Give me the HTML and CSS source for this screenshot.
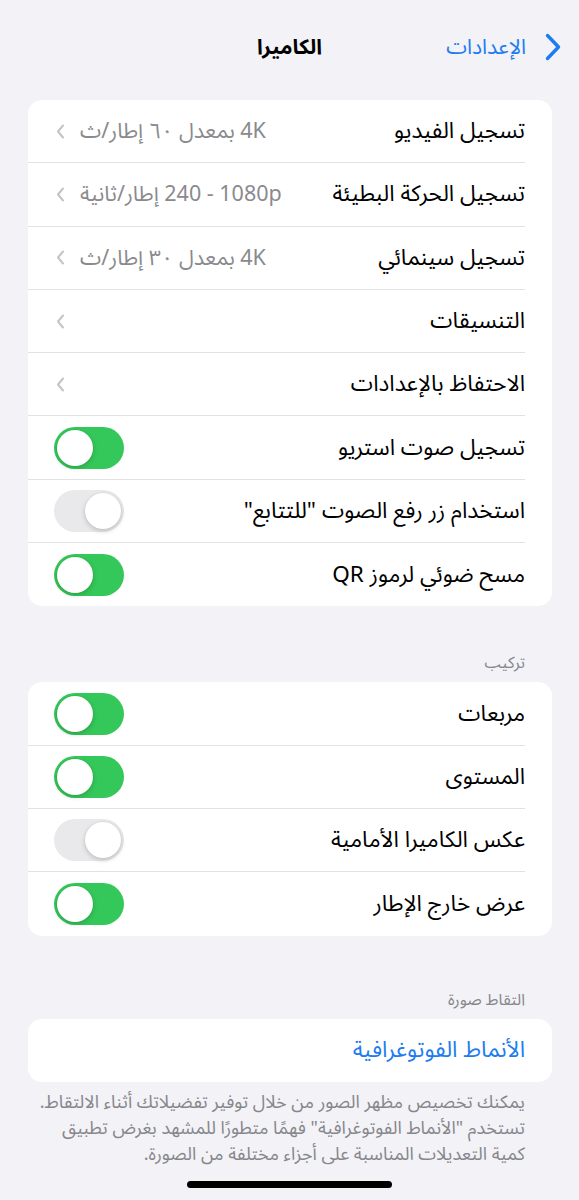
FILE: index.html
```html
<!DOCTYPE html>
<html lang="ar" dir="rtl">
<head>
  <meta charset="UTF-8">
  <meta name="viewport" content="width=device-width, initial-scale=1.0">
  <title>الكاميرا</title>
  <link rel="stylesheet" href="styles.css">
</head>
<body>
  <header class="nav">
    <a class="back" href="#">
      <svg class="back-chevron" width="16" height="28" viewBox="0 0 16 28"><path d="M2.5 2.5 L13.5 14 L2.5 25.5" fill="none" stroke="currentColor" stroke-width="3.4" stroke-linecap="round" stroke-linejoin="round"/></svg>
      <span>الإعدادات</span>
    </a>
    <h1 class="title">الكاميرا</h1>
    <span></span>
  </header>

  <main class="content">
    <section class="card">
      <div class="row"><div class="row-body">
        <span class="label">تسجيل الفيديو</span>
        <span class="detail">4K بمعدل ٦٠ إطار/ث</span>
        <svg class="chev" width="9" height="15" viewBox="0 0 9 15"><path d="M7 1.5 L2 7.5 L7 13.5" fill="none" stroke="currentColor" stroke-width="2" stroke-linecap="round" stroke-linejoin="round"/></svg>
      </div></div>
      <div class="row"><div class="row-body">
        <span class="label">تسجيل الحركة البطيئة</span>
        <span class="detail">1080p&rlm; - 240 إطار/ثانية</span>
        <svg class="chev" width="9" height="15" viewBox="0 0 9 15"><path d="M7 1.5 L2 7.5 L7 13.5" fill="none" stroke="currentColor" stroke-width="2" stroke-linecap="round" stroke-linejoin="round"/></svg>
      </div></div>
      <div class="row"><div class="row-body">
        <span class="label">تسجيل سينمائي</span>
        <span class="detail">4K بمعدل ٣٠ إطار/ث</span>
        <svg class="chev" width="9" height="15" viewBox="0 0 9 15"><path d="M7 1.5 L2 7.5 L7 13.5" fill="none" stroke="currentColor" stroke-width="2" stroke-linecap="round" stroke-linejoin="round"/></svg>
      </div></div>
      <div class="row"><div class="row-body">
        <span class="label">التنسيقات</span>
        <span class="detail"></span>
        <svg class="chev" width="9" height="15" viewBox="0 0 9 15"><path d="M7 1.5 L2 7.5 L7 13.5" fill="none" stroke="currentColor" stroke-width="2" stroke-linecap="round" stroke-linejoin="round"/></svg>
      </div></div>
      <div class="row"><div class="row-body">
        <span class="label">الاحتفاظ بالإعدادات</span>
        <span class="detail"></span>
        <svg class="chev" width="9" height="15" viewBox="0 0 9 15"><path d="M7 1.5 L2 7.5 L7 13.5" fill="none" stroke="currentColor" stroke-width="2" stroke-linecap="round" stroke-linejoin="round"/></svg>
      </div></div>
      <div class="row"><div class="row-body">
        <span class="label">تسجيل صوت استريو</span>
        <span class="switch on"><span class="knob"></span></span>
      </div></div>
      <div class="row"><div class="row-body">
        <span class="label">استخدام زر رفع الصوت "للتتابع"</span>
        <span class="switch off"><span class="knob"></span></span>
      </div></div>
      <div class="row"><div class="row-body">
        <span class="label">مسح ضوئي لرموز QR</span>
        <span class="switch on"><span class="knob"></span></span>
      </div></div>
    </section>

    <h2 class="section-head">تركيب</h2>
    <section class="card">
      <div class="row"><div class="row-body">
        <span class="label">مربعات</span>
        <span class="switch on"><span class="knob"></span></span>
      </div></div>
      <div class="row"><div class="row-body">
        <span class="label">المستوى</span>
        <span class="switch on"><span class="knob"></span></span>
      </div></div>
      <div class="row"><div class="row-body">
        <span class="label">عكس الكاميرا الأمامية</span>
        <span class="switch off"><span class="knob"></span></span>
      </div></div>
      <div class="row"><div class="row-body">
        <span class="label">عرض خارج الإطار</span>
        <span class="switch on"><span class="knob"></span></span>
      </div></div>
    </section>

    <h2 class="section-head photo">التقاط صورة</h2>
    <section class="card">
      <div class="row"><div class="row-body">
        <span class="label link">الأنماط الفوتوغرافية</span>
      </div></div>
    </section>
    <p class="footnote">يمكنك تخصيص مظهر الصور من خلال توفير تفضيلاتك أثناء الالتقاط.<br>تستخدم "الأنماط الفوتوغرافية" فهمًا متطورًا للمشهد بغرض تطبيق كمية التعديلات المناسبة على أجزاء مختلفة من الصورة.</p>
  </main>

  <div class="home-bar"></div>
</body>
</html>
```

FILE: styles.css
```css
html, body {
  margin: 0;
  padding: 0;
}

body {
  font-family: "Noto Sans Arabic", "DejaVu Sans", sans-serif;
  background-color: #f2f2f7;
  color: #000;
  width: 579px;
  height: 1200px;
  overflow: hidden;
}

.nav {
  display: grid;
  grid-template-columns: 1fr auto 1fr;
  align-items: center;
  height: 60px;
  padding: 17px 18px 0 18px;
}

.back {
  display: flex;
  align-items: center;
  gap: 19px;
  color: #1c7cf0;
  text-decoration: none;
  font-size: 21px;
}

.back-chevron {
  color: #1c7cf0;
}

.title {
  margin: 0;
  font-size: 21px;
  font-weight: bold;
}

.content {
  padding: 23px 27px 0 28px;
}

.card {
  background-color: #fff;
  border-radius: 14px;
  overflow: hidden;
}

.row {
  padding-right: 27px;
  height: 63.3px;
  display: flex;
}

.row-body {
  flex: 1;
  display: flex;
  align-items: center;
  padding-left: 26px;
  border-bottom: 1px solid #e2e2e5;
}

.row:last-child .row-body {
  border-bottom: none;
}

.label {
  flex: 1;
  font-size: 22.5px;
  white-space: nowrap;
}

.label.link {
  color: #1c7cf0;
}

.detail {
  color: #8a8a8e;
  font-size: 21.5px;
  margin-left: 15px;
  white-space: nowrap;
}

.chev {
  color: #c4c4c7;
  margin-left: 2px;
}

.switch {
  width: 70px;
  height: 42px;
  border-radius: 21px;
  display: flex;
  align-items: center;
  padding: 3px;
  box-sizing: border-box;
}

.switch.on {
  background-color: #34c759;
  justify-content: flex-end;
}

.switch.off {
  background-color: #e9e9eb;
  justify-content: flex-start;
}

.knob {
  width: 36px;
  height: 36px;
  border-radius: 50%;
  background-color: #fff;
  box-shadow: 0 2px 5px rgba(0, 0, 0, 0.18), 0 0 0 0.5px rgba(0, 0, 0, 0.06);
}

.section-head {
  margin: 40px 27px 2px 0;
  font-size: 16px;
  font-weight: normal;
  color: #86868b;
}

.section-head.photo {
  margin-top: 47px;
  margin-bottom: 2px;
}

.footnote {
  margin: 7px 27px 0 0;
  font-size: 18px;
  line-height: 26px;
  color: #86868b;
}

.home-bar {
  width: 205px;
  height: 7px;
  border-radius: 4px;
  background-color: #000;
  position: fixed;
  bottom: 12px;
  left: 187px;
}
```
